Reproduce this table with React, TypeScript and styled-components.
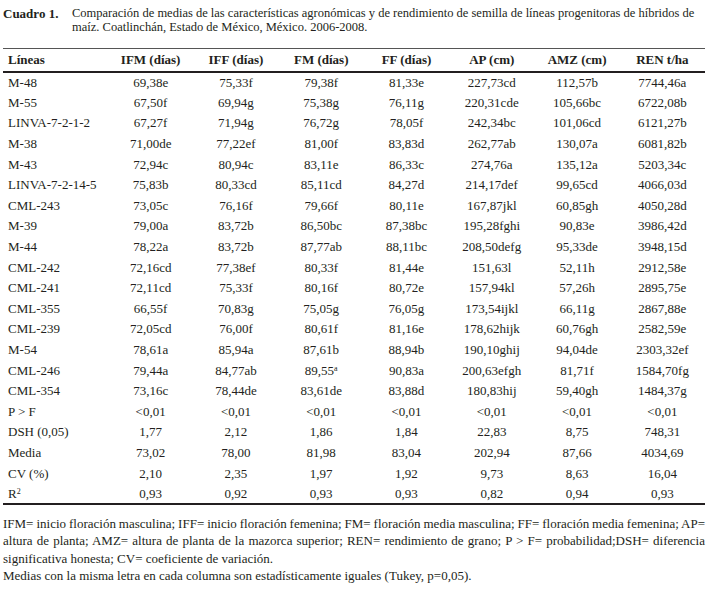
import React from "react";
import styled, { createGlobalStyle } from "styled-components";

const Global = createGlobalStyle`
  html, body { margin: 0; padding: 0; background: #ffffff; }
  body { font-family: "Liberation Serif", "Times New Roman", serif; color: #231f20; }
`;

const Page = styled.div`
  width: 706px;
  box-sizing: border-box;
  padding: 7px 1px 0 3px;
`;

const Caption = styled.div`
  display: flex;
  font-size: 12.5px;
  line-height: 13.5px;
`;

const CaptionLabel = styled.span`
  flex: 0 0 69px;
  font-weight: bold;
  font-size: 13px;
`;

const CaptionText = styled.span`
  flex: 1;
`;

const Table = styled.table`
  margin-top: 14px;
  width: 702px;
  border-collapse: collapse;
  table-layout: fixed;
  font-size: 13px;
  font-family: "Liberation Serif", "Times New Roman", serif;
  color: #231f20;
`;

const HeadRow = styled.tr`
  border-top: 1px solid #555;
  border-bottom: 2px solid #231f20;
  height: 23px;
`;

const HeadCell = styled.th<{ $first?: boolean }>`
  font-weight: bold;
  padding: 0 0 0 ${(p) => (p.$first ? "5px" : "0")};
  text-align: ${(p) => (p.$first ? "left" : "center")};
  width: ${(p) => (p.$first ? "100px" : "auto")};
  white-space: nowrap;
`;

const Row = styled.tr<{ $last?: boolean }>`
  height: 20.6px;
  border-bottom: ${(p) => (p.$last ? "2px solid #231f20" : "none")};
`;

const Cell = styled.td<{ $first?: boolean }>`
  padding: 0 0 0 ${(p) => (p.$first ? "5px" : "0")};
  text-align: ${(p) => (p.$first ? "left" : "center")};
  white-space: nowrap;
  line-height: 15px;
`;

const Sup = styled.sup`
  font-size: 8px;
  vertical-align: top;
  position: relative;
  top: -2px;
`;

const Notes = styled.div`
  margin-top: 10px;
  width: 702px;
  font-size: 13px;
  line-height: 17.3px;
`;

const NoteLine = styled.div<{ $justify?: boolean }>`
  text-align: ${(p) => (p.$justify ? "justify" : "left")};
  text-align-last: ${(p) => (p.$justify ? "justify" : "left")};
  word-spacing: ${(p) => (p.$justify ? "-1.3px" : "0")};
  white-space: nowrap;
`;

type Val = React.ReactNode;

const headers = ["IFM (días)", "IFF (días)", "FM (días)", "FF (días)", "AP (cm)", "AMZ (cm)", "REN t/ha"];

const rows: [Val, Val[]][] = [
  ["M-48", ["69,38e", "75,33f", "79,38f", "81,33e", "227,73cd", "112,57b", "7744,46a"]],
  ["M-55", ["67,50f", "69,94g", "75,38g", "76,11g", "220,31cde", "105,66bc", "6722,08b"]],
  ["LINVA-7-2-1-2", ["67,27f", "71,94g", "76,72g", "78,05f", "242,34bc", "101,06cd", "6121,27b"]],
  ["M-38", ["71,00de", "77,22ef", "81,00f", "83,83d", "262,77ab", "130,07a", "6081,82b"]],
  ["M-43", ["72,94c", "80,94c", "83,11e", "86,33c", "274,76a", "135,12a", "5203,34c"]],
  ["LINVA-7-2-14-5", ["75,83b", "80,33cd", "85,11cd", "84,27d", "214,17def", "99,65cd", "4066,03d"]],
  ["CML-243", ["73,05c", "76,16f", "79,66f", "80,11e", "167,87jkl", "60,85gh", "4050,28d"]],
  ["M-39", ["79,00a", "83,72b", "86,50bc", "87,38bc", "195,28fghi", "90,83e", "3986,42d"]],
  ["M-44", ["78,22a", "83,72b", "87,77ab", "88,11bc", "208,50defg", "95,33de", "3948,15d"]],
  ["CML-242", ["72,16cd", "77,38ef", "80,33f", "81,44e", "151,63l", "52,11h", "2912,58e"]],
  ["CML-241", ["72,11cd", "75,33f", "80,16f", "80,72e", "157,94kl", "57,26h", "2895,75e"]],
  ["CML-355", ["66,55f", "70,83g", "75,05g", "76,05g", "173,54ijkl", "66,11g", "2867,88e"]],
  ["CML-239", ["72,05cd", "76,00f", "80,61f", "81,16e", "178,62hijk", "60,76gh", "2582,59e"]],
  ["M-54", ["78,61a", "85,94a", "87,61b", "88,94b", "190,10ghij", "94,04de", "2303,32ef"]],
  ["CML-246", ["79,44a", "84,77ab", <>89,55<Sup>a</Sup></>, "90,83a", "200,63efgh", "81,71f", "1584,70fg"]],
  ["CML-354", ["73,16c", "78,44de", "83,61de", "83,88d", "180,83hij", "59,40gh", "1484,37g"]],
  ["P > F", ["<0,01", "<0,01", "<0,01", "<0,01", "<0,01", "<0,01", "<0,01"]],
  ["DSH (0,05)", ["1,77", "2,12", "1,86", "1,84", "22,83", "8,75", "748,31"]],
  ["Media", ["73,02", "78,00", "81,98", "83,04", "202,94", "87,66", "4034,69"]],
  ["CV (%)", ["2,10", "2,35", "1,97", "1,92", "9,73", "8,63", "16,04"]],
  [<>R<Sup>2</Sup></>, ["0,93", "0,92", "0,93", "0,93", "0,82", "0,94", "0,93"]],
];

export default function App() {
  return (
    <Page>
      <Global />
      <Caption>
        <CaptionLabel>Cuadro 1.</CaptionLabel>
        <CaptionText>
          Comparación de medias de las características agronómicas y de rendimiento de semilla de líneas progenitoras de híbridos de maíz. Coatlinchán, Estado de México, México. 2006-2008.
        </CaptionText>
      </Caption>
      <Table>
        <thead>
          <HeadRow>
            <HeadCell $first>Líneas</HeadCell>
            {headers.map((h) => (
              <HeadCell key={h}>{h}</HeadCell>
            ))}
          </HeadRow>
        </thead>
        <tbody>
          {rows.map(([name, vals], i) => (
            <Row key={i} $last={i === rows.length - 1}>
              <Cell $first>{name}</Cell>
              {vals.map((v, j) => (
                <Cell key={j}>{v}</Cell>
              ))}
            </Row>
          ))}
        </tbody>
      </Table>
      <Notes>
        <NoteLine $justify>
          IFM= inicio floración masculina; IFF= inicio floración femenina; FM= floración media masculina; FF= floración media femenina; AP=
        </NoteLine>
        <NoteLine $justify>
          altura de planta; AMZ= altura de planta de la mazorca superior; REN= rendimiento de grano; P &gt; F= probabilidad;DSH= diferencia
        </NoteLine>
        <NoteLine>significativa honesta; CV= coeficiente de variación.</NoteLine>
        <NoteLine>Medias con la misma letra en cada columna son estadísticamente iguales (Tukey, p=0,05).</NoteLine>
      </Notes>
    </Page>
  );
}
